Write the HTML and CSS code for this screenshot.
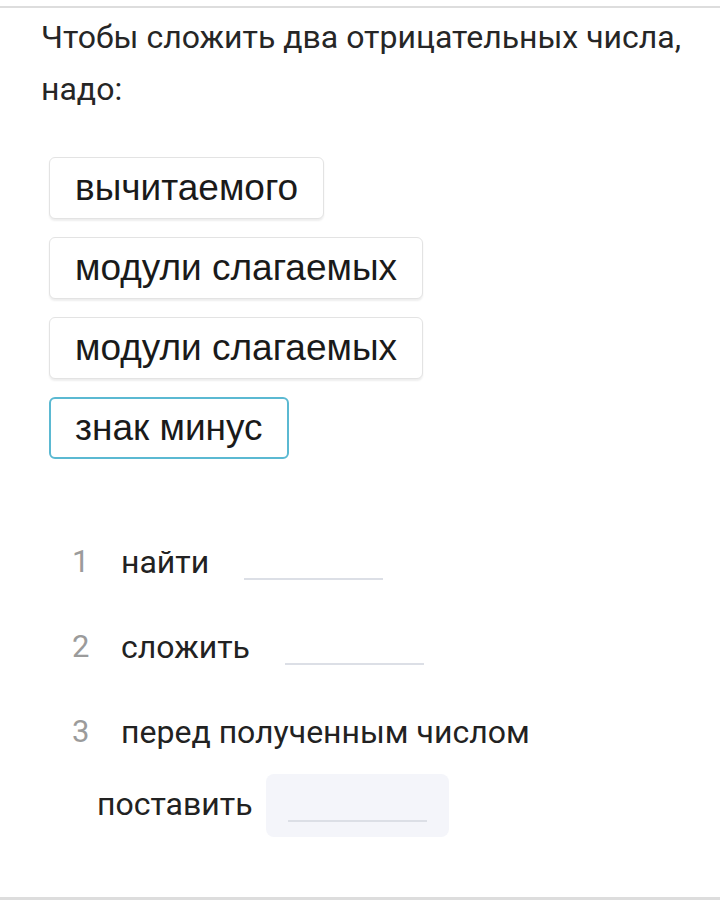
FILE: index.html
```html
<!DOCTYPE html>
<html lang="ru">
<head>
<meta charset="utf-8">
<link rel="stylesheet" href="styles.css">
</head>
<body>
<div class="page">
  <div class="rule rule-top"></div>
  <p class="question">Чтобы сложить два отрицательных числа, надо:</p>
  <div class="chips">
    <div class="chip">вычитаемого</div>
    <div class="chip">модули слагаемых</div>
    <div class="chip">модули слагаемых</div>
    <div class="chip chip-active">знак минус</div>
  </div>
  <div class="steps">
    <div class="step">
      <span class="num">1</span>
      <div class="line">
        <span class="word">найти</span>
        <span class="drop"><span class="blank"></span></span>
      </div>
    </div>
    <div class="step">
      <span class="num">2</span>
      <div class="line">
        <span class="word">сложить</span>
        <span class="drop"><span class="blank"></span></span>
      </div>
    </div>
    <div class="step step-wrap">
      <div class="line">
        <span class="num">3</span>
        <span class="word">перед полученным числом</span>
      </div>
      <div class="line line-cont">
        <span class="word">поставить</span>
        <span class="drop drop-filled"><span class="blank"></span></span>
      </div>
    </div>
  </div>
  <div class="rule rule-bottom"></div>
</div>
</body>
</html>
```
FILE: styles.css
```css
html, body {
  margin: 0;
  padding: 0;
  background: #ffffff;
}
.page {
  width: 720px;
  height: 904px;
  display: flex;
  flex-direction: column;
  font-family: Roboto, "Noto Sans", sans-serif;
  color: #222222;
}
.rule {
  background: #dddddd;
}
.rule-top {
  margin-top: 6px;
  height: 2px;
}
.rule-bottom {
  margin-top: auto;
  height: 3px;
  margin-bottom: 4px;
}
.question {
  margin: 3px 0 0 41px;
  font-size: 32px;
  line-height: 52px;
  width: 660px;
  color: #262626;
}
.chips {
  margin: 42px 0 0 49px;
  display: flex;
  flex-direction: column;
  align-items: flex-start;
  gap: 18px;
}
.chip {
  box-sizing: border-box;
  height: 62px;
  display: flex;
  align-items: center;
  padding: 0 25px;
  border: 1px solid #e3e3e3;
  border-radius: 6px;
  box-shadow: 0 2px 2px rgba(0, 0, 0, 0.07);
  font-family: "Liberation Sans", Arial, sans-serif;
  font-size: 37px;
  color: #1a1a1a;
  background: #ffffff;
}
.chip-active {
  border: 2px solid #5bb9d2;
  padding: 0 24px;
  box-shadow: none;
}
.steps {
  margin: 73px 0 0 72px;
  display: flex;
  flex-direction: column;
  gap: 22px;
}
.step {
  display: flex;
  align-items: center;
}
.step-wrap {
  flex-direction: column;
  align-items: flex-start;
  gap: 9px;
}
.num {
  width: 49px;
  flex: none;
  font-size: 31px;
  color: #9b9b9b;
  padding-bottom: 4px;
}
.line {
  display: flex;
  align-items: center;
  height: 63px;
}
.line-cont {
  margin-left: 25px;
}
.word {
  font-size: 32px;
  color: #222222;
  padding-bottom: 4px;
}
.drop {
  box-sizing: border-box;
  width: 183px;
  height: 63px;
  margin-left: 13px;
  border-radius: 8px;
  padding: 0 22px 15px;
  display: flex;
  align-items: flex-end;
}
.drop-filled {
  background: #f4f5fa;
}
.blank {
  display: block;
  width: 100%;
  height: 2px;
  background: #dcdfe6;
}
```
